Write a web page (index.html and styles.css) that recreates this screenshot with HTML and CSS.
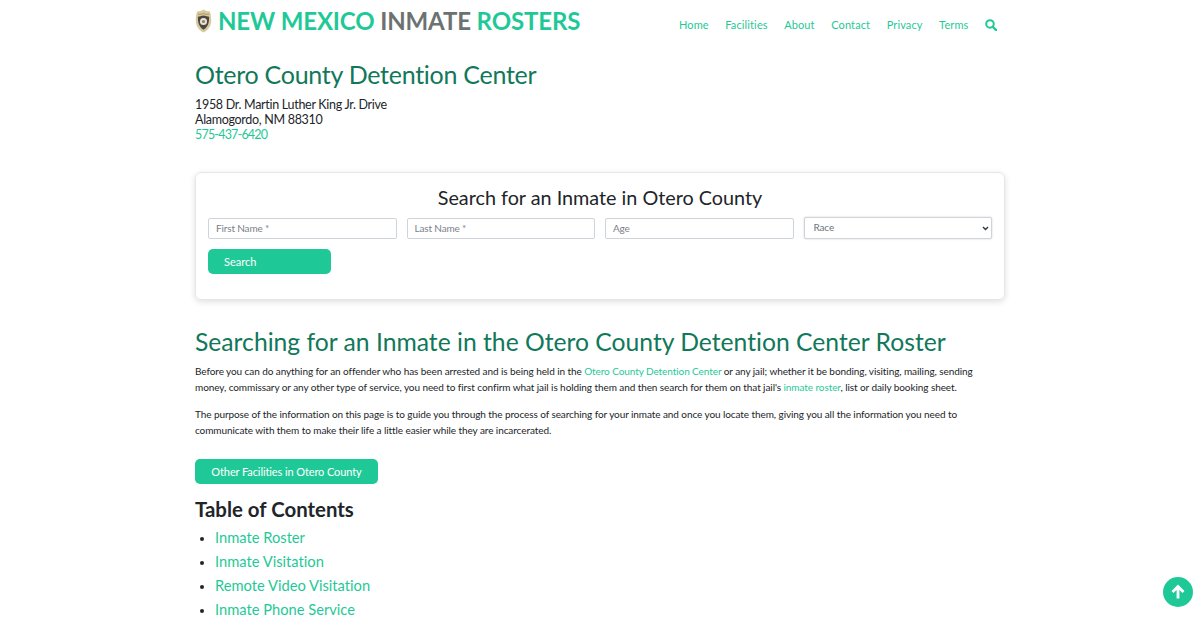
FILE: index.html
```html
<!DOCTYPE html>
<html lang="en">
<head>
<meta charset="utf-8">
<title>Otero County Detention Center</title>
<link rel="stylesheet" href="styles.css">
</head>
<body>
<div class="container">
  <header class="topbar">
    <a class="brand" href="#">
      <svg class="badge" viewBox="0 0 18 26" width="17" height="24" aria-hidden="true">
        <path d="M9 .6c2 1.500 4.500 2 7 2 .6 2.500 1.400 5 1.400 9.400 0 7-4 12-8.400 13.400C4.600 24 .6 19 .6 12 .6 7.600 1.400 5.100 2 2.600c2.500 0 5-.5 7-2z" fill="#d8c9a0"/>
        <path d="M9 7l6 1.500c.5 6-1.500 11.500-6 14C4.500 20 2.500 14.500 3 8.500z" fill="#4a4841"/>
        <circle cx="9" cy="13.500" r="3.800" fill="#e9e4d2"/>
        <circle cx="9" cy="13.500" r="1.700" fill="#8a8360"/>
        <path d="M3 5.500c2 .6 4 .4 6-.7 2 1.100 4 1.300 6 .7" fill="none" stroke="#a58f58" stroke-width="1"/>
      </svg>
      <span class="brand-text">NEW MEXICO <span class="brand-grey">INMATE</span> ROSTERS</span>
    </a>
    <nav class="nav">
      <a href="#">Home</a>
      <a href="#">Facilities</a>
      <a href="#">About</a>
      <a href="#">Contact</a>
      <a href="#">Privacy</a>
      <a href="#">Terms</a>
      <a href="#" class="nav-search" aria-label="Search">
        <svg viewBox="0 0 14 14" width="12" height="12" aria-hidden="true"><circle cx="5.800" cy="5.800" r="4.400" fill="none" stroke="#1fc997" stroke-width="2.300"/><path d="M9 9l4 4" stroke="#1fc997" stroke-width="2.700" stroke-linecap="round"/></svg>
      </a>
    </nav>
  </header>

  <h1 class="title">Otero County Detention Center</h1>
  <address class="addr">
    1958 Dr. Martin Luther King Jr. Drive<br>
    Alamogordo, NM 88310<br>
    <a href="#">575-437-6420</a>
  </address>

  <section class="card">
    <h2 class="card-title">Search for an Inmate in Otero County</h2>
    <form class="fields">
      <input class="field" type="text" placeholder="First Name *">
      <input class="field" type="text" placeholder="Last Name *">
      <input class="field" type="text" placeholder="Age">
      <select class="field select"><option>Race</option></select>
    </form>
    <button class="btn btn-search" type="button">Search</button>
  </section>

  <h2 class="section-title">Searching for an Inmate in the Otero County Detention Center Roster</h2>
  <p class="para">Before you can do anything for an offender who has been arrested and is being held in the <a href="#">Otero County Detention Center</a> or any jail; whether it be bonding, visiting, mailing, sending money, commissary or any other type of service, you need to first confirm what jail is holding them and then search for them on that jail's <a href="#">inmate roster</a>, list or daily booking sheet.</p>
  <p class="para">The purpose of the information on this page is to guide you through the process of searching for your inmate and once you locate them, giving you all the information you need to communicate with them to make their life a little easier while they are incarcerated.</p>

  <button class="btn btn-other" type="button">Other Facilities in Otero County</button>

  <h3 class="toc-title">Table of Contents</h3>
  <ul class="toc">
    <li><a href="#">Inmate Roster</a></li>
    <li><a href="#">Inmate Visitation</a></li>
    <li><a href="#">Remote Video Visitation</a></li>
    <li><a href="#">Inmate Phone Service</a></li>
  </ul>
</div>
<a class="to-top" href="#" aria-label="Back to top">
  <svg viewBox="0 0 16 16" width="16" height="16" aria-hidden="true"><path d="M8 14.500V2.500M2.500 8L8 2.500 13.500 8" fill="none" stroke="#fff" stroke-width="2.800"/></svg>
</a>
</body>
</html>
```
FILE: styles.css
```css
html { overflow: hidden; }
* { box-sizing: border-box; }
body {
  margin: 0;
  background: #fff;
  color: #212529;
  font-family: "Lato", "Noto Sans", sans-serif;
  font-size: 11px;
  font-variant-ligatures: none;
}
a { color: #1fc997; text-decoration: none; }
.container { width: 810px; margin: 0 auto; }

.topbar { display: flex; justify-content: space-between; align-items: flex-start; height: 47px; }
.brand { display: flex; align-items: center; gap: 6px; padding-top: 9px; }
.brand-text { font-size: 24px; font-weight: 700; line-height: 24px; letter-spacing: -.13px; }
.brand-grey { color: #6c7272; }
.nav { display: flex; gap: 16.500px; align-items: center; padding: 18px 8px 0 0; font-size: 11px; line-height: 14px; }
.nav a { letter-spacing: .12px; }
.nav-search { display: flex; }

.title { margin: 0; padding-top: 11px; font-size: 25px; line-height: 32px; font-weight: 400; color: #11785a; letter-spacing: -.27px; }
.addr { font-style: normal; font-size: 12.500px; line-height: 15px; letter-spacing: -.3px; color: #212529; margin-top: 7px; }
.addr a { letter-spacing: -.8px; }

.card {
  margin-top: 30px;
  height: 128px;
  padding: 12px;
  border: 1px solid #e6e6e6;
  border-radius: 6px;
  box-shadow: 0 2px 6px rgba(0,0,0,.13);
}
.card-title { margin: 0; text-align: center; font-size: 19.800px; line-height: 24px; font-weight: 400; color: #212529; }
.fields { display: grid; grid-template-columns: repeat(4, 1fr); gap: 10px; margin-top: 8px; align-items: end; }
.field {
  width: 100%;
  height: 21px;
  padding: 0 7px 2px;
  border: 1px solid #ced4da;
  border-radius: 2px;
  font: 10px "Lato", sans-serif;
  letter-spacing: -.15px;
  color: #6c757d;
  background: #fff;
}
.field::placeholder { color: #7b8288; opacity: 1; }
.select {
  height: 22px;
  padding: 0 9px 2px;
  box-shadow: 0 0 2px rgba(0,0,0,.2);
  appearance: none;
  background: #fff url("data:image/svg+xml,%3Csvg xmlns='http://www.w3.org/2000/svg' width='7' height='5' viewBox='0 0 7 5'%3E%3Cpath d='M1 1l2.500 2.500L6 1' fill='none' stroke='%23333' stroke-width='1.400'/%3E%3C/svg%3E") no-repeat right 2px center;
}

.btn {
  display: block;
  border: 0;
  border-radius: 5px;
  background: #1fc997;
  color: #fff;
  font: 11px "Lato", sans-serif;
  height: 25px;
  padding-bottom: 2px;
}
.btn-search { width: 123px; margin-top: 10px; text-align: left; padding-left: 16px; }
.btn-other { width: 183px; margin-top: 21px; letter-spacing: -.1px; }

.section-title { margin: 27px 0 0; font-size: 24.700px; line-height: 30px; font-weight: 400; color: #11785a; }
.para { margin: 6px 0 0; font-size: 10px; line-height: 16px; letter-spacing: -.08px; color: #212529; }
.para + .para { margin-top: 11px; }
.para a { color: #1fc997; }

.toc-title { margin: 13px 0 0; font-size: 20.400px; line-height: 24px; font-weight: 700; color: #212529; }
.toc { margin: 4px 0 0; padding-left: 20px; font-size: 14.700px; line-height: 24px; }
.toc li::marker { font-size: 12px; }

.to-top {
  position: fixed;
  right: 7px;
  bottom: 13px;
  width: 30px;
  height: 30px;
  border-radius: 50%;
  background: #1fc997;
  display: flex;
  align-items: center;
  justify-content: center;
}
```
